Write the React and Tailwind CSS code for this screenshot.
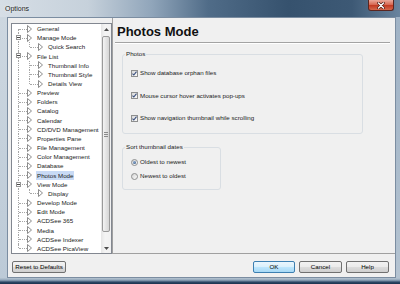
import React from "react";

const tree = [
  { label: "General", level: 0 },
  { label: "Manage Mode", level: 0, open: true },
  { label: "Quick Search", level: 1, last: true },
  { label: "File List", level: 0, open: true },
  { label: "Thumbnail Info", level: 1 },
  { label: "Thumbnail Style", level: 1 },
  { label: "Details View", level: 1, last: true },
  { label: "Preview", level: 0 },
  { label: "Folders", level: 0 },
  { label: "Catalog", level: 0 },
  { label: "Calendar", level: 0 },
  { label: "CD/DVD Management", level: 0 },
  { label: "Properties Pane", level: 0 },
  { label: "File Management", level: 0 },
  { label: "Color Management", level: 0 },
  { label: "Database", level: 0 },
  { label: "Photos Mode", level: 0, selected: true },
  { label: "View Mode", level: 0, open: true },
  { label: "Display", level: 1, last: true },
  { label: "Develop Mode", level: 0 },
  { label: "Edit Mode", level: 0 },
  { label: "ACDSee 365", level: 0 },
  { label: "Media", level: 0 },
  { label: "ACDSee Indexer", level: 0 },
  { label: "ACDSee PicaView", level: 0 },
];

function Arrow() {
  return (
    <svg width="5" height="8" viewBox="0 0 5 8" className="shrink-0">
      <path d="M0.5 0.5 L4.5 4 L0.5 7.5 Z" fill="#fff" stroke="#808080" strokeWidth="0.9" strokeLinejoin="round" />
    </svg>
  );
}

function TreeRow({ item, first, lastRow }) {
  const child = item.level === 1;
  // vertical root line
  let rootLine = "inset-y-0";
  if (first) rootLine = "top-1/2 bottom-0";
  if (lastRow) rootLine = "top-0 h-1/2";

  return (
    <div className="flex h-[9.17px] items-center">
      <div className={child ? "relative h-full w-[26px] shrink-0" : "relative h-full w-[15px] shrink-0"}>
        <span className={`absolute left-[6px] border-l border-dotted border-[#a6a6a6] ${rootLine}`} />
        {!child && <span className="absolute left-[7px] top-1/2 w-[8px] border-t border-dotted border-[#a6a6a6]" />}
        {child && (
          <>
            <span className={`absolute left-[17px] border-l border-dotted border-[#a6a6a6] ${item.last ? "top-0 h-1/2" : "inset-y-0"}`} />
            <span className="absolute left-[18px] top-1/2 w-[8px] border-t border-dotted border-[#a6a6a6]" />
          </>
        )}
        {item.open && (
          <span className="absolute left-[4px] top-[2px] flex h-[5px] w-[5px] items-center justify-center border border-[#969696] bg-white">
            <span className="h-px w-[3px] bg-[#4a4a4a]" />
          </span>
        )}
      </div>
      <Arrow />
      <span
        className={
          item.selected
            ? "ml-[4px] whitespace-nowrap bg-[#c8daf5] px-[1px] leading-[9px]"
            : "ml-[5px] whitespace-nowrap leading-[9px]"
        }
      >
        {item.label}
      </span>
    </div>
  );
}

function Scrollbar() {
  return (
    <div className="flex w-[10px] shrink-0 flex-col bg-[linear-gradient(to_right,#e6e6e6,#f4f4f4_40%,#f1f1f1)]">
      <div className="flex h-[11px] items-center justify-center">
        <svg width="5" height="3" viewBox="0 0 5 3">
          <path d="M0 3 L2.5 0 L5 3 Z" fill="#4d4d4d" />
        </svg>
      </div>
      <div className="mx-auto mt-[1px] flex h-[196px] w-[8px] items-center justify-center rounded-[2px] border border-[#9a9a9a] bg-[linear-gradient(to_right,#f4f4f4,#e4e4e4_50%,#d6d6d6)]">
        <div className="flex flex-col gap-[1px]">
          <span className="h-px w-[4px] bg-[#8a8a8a]" />
          <span className="h-px w-[4px] bg-[#8a8a8a]" />
          <span className="h-px w-[4px] bg-[#8a8a8a]" />
        </div>
      </div>
      <div className="flex-1" />
      <div className="flex h-[10px] items-center justify-center">
        <svg width="5" height="3" viewBox="0 0 5 3">
          <path d="M0 0 L2.5 3 L5 0 Z" fill="#4d4d4d" />
        </svg>
      </div>
    </div>
  );
}

function Check({ label }) {
  return (
    <div className="flex h-[9px] items-center">
      <span className="flex h-[7px] w-[7px] shrink-0 items-center justify-center border border-[#8e8f8f] bg-[linear-gradient(135deg,#d9d9d9,#fafafa)]">
        <svg width="5" height="5" viewBox="0 0 5 5">
          <path d="M0.5 2.6 L1.8 4 L4.5 0.6" fill="none" stroke="#364c7c" strokeWidth="1.1" />
        </svg>
      </span>
      <span className="ml-[2px] whitespace-nowrap">{label}</span>
    </div>
  );
}

function Radio({ label, checked }) {
  return (
    <div className="flex h-[9px] items-center">
      <span className="flex h-[7px] w-[7px] shrink-0 items-center justify-center rounded-full border border-[#8e8f8f] bg-[linear-gradient(135deg,#d4d4d4,#fbfbfb)]">
        {checked && <span className="h-[3px] w-[3px] rounded-full bg-[radial-gradient(circle_at_35%_35%,#8fb0d8,#2d4d78)]" />}
      </span>
      <span className="ml-[2px] whitespace-nowrap">{label}</span>
    </div>
  );
}

function Btn({ children, ok, className }) {
  return (
    <button
      className={`${className} flex h-[12px] items-center justify-center rounded-[2px] border leading-[8px] text-black ${
        ok
          ? "border-[#3c7fb1] bg-[linear-gradient(to_bottom,#eaf6fd,#d9f0fc_50%,#bee6fd_50%,#a7d9f5)]"
          : "border-[#707070] bg-[linear-gradient(to_bottom,#f2f2f2,#ebebeb_50%,#dddddd_50%,#cfcfcf)]"
      }`}
    >
      {children}
    </button>
  );
}

export default function App() {
  return (
    <div className="flex h-[284px] w-[400px] flex-col overflow-hidden bg-[#b9c7d4] font-['Liberation_Sans',Arial,sans-serif] text-[6.2px] text-[#222]">
      {/* glass title bar */}
      <div className="flex h-[17px] shrink-0 items-start justify-between bg-[linear-gradient(to_right,#d6dee6_0%,#c6d1db_22%,#90a5ba_38%,#506c88_52%,#36526e_72%,#3d5975_88%,#6a849e_100%)]">
        <span className="ml-[5px] mt-[5px] text-[7px] leading-[8px] text-[#1b1b1b] [text-shadow:0_0_3px_#fff]">Options</span>
        <div className="mr-[6px] flex h-[11px] w-[26px] items-center justify-center rounded-b-[3px] border border-t-0 border-[#5b2620] bg-[linear-gradient(to_bottom,#eaa99b,#d86a55_45%,#c23b24_55%,#d4684c)]">
          <svg width="8" height="7" viewBox="0 0 8 7">
            <path d="M1.5 1 L6.5 6 M6.5 1 L1.5 6" stroke="#4a1d18" strokeWidth="2.6" strokeLinecap="round" />
            <path d="M1.5 1 L6.5 6 M6.5 1 L1.5 6" stroke="#fff" strokeWidth="1.4" strokeLinecap="round" />
          </svg>
        </div>
      </div>

      <div className="flex h-[261px] shrink-0">
        <div className="w-[7px] bg-[linear-gradient(to_bottom,#cdd7e0,#bccad7)]" />
        <div className="flex h-[261px] w-[389px] flex-col border border-[#7b8da1] bg-[#f0f0f0]">
          <div className="flex h-[236px]">
            {/* category tree */}
            <div className="ml-[3px] mt-[5px] flex h-[231px] w-[101px] border border-[#828790] bg-white">
              <div className="flex-1 overflow-hidden">
                {tree.map((item, i) => (
                  <TreeRow key={item.label} item={item} first={i === 0} lastRow={i === tree.length - 1} />
                ))}
              </div>
              <Scrollbar />
            </div>

            {/* settings page */}
            <div className="flex-1 border-b border-l border-[#a0a0a0]">
              <div className="pl-[4px] pt-[6px] text-[13px] font-bold leading-[15px] text-[#111]">Photos Mode</div>
              <div className="ml-[2px] mr-[5px] mt-[3px] border-b border-t border-b-white border-t-[#a3a3a3]" />

              <fieldset className="ml-[9px] mt-[6px] w-[241px] rounded-[3px] border border-[#d9dee3] pb-[10px] pt-[10.5px]">
                <legend className="ml-[2px] px-[1px] leading-[8px]">Photos</legend>
                <div className="ml-[8px] flex flex-col gap-[13.5px]">
                  <Check label="Show database orphan files" />
                  <Check label="Mouse cursor hover activates pop-ups" />
                  <Check label="Show navigation thumbnail while scrolling" />
                </div>
              </fieldset>

              <fieldset className="ml-[9px] mt-[9.5px] w-[99px] rounded-[3px] border border-[#d9dee3] pb-[8px] pt-[6.5px]">
                <legend className="ml-[2px] px-[1px] leading-[8px]">Sort thumbnail dates</legend>
                <div className="ml-[8px] flex flex-col gap-[5px]">
                  <Radio label="Oldest to newest" checked />
                  <Radio label="Newest to oldest" />
                </div>
              </fieldset>
            </div>
          </div>

          <div className="mt-[7px] flex h-[12px]">
            <Btn className="ml-[4px] w-[54px]">Reset to Defaults</Btn>
            <Btn ok className="ml-auto w-[42px]">OK</Btn>
            <Btn className="ml-[4px] w-[43px]">Cancel</Btn>
            <Btn className="ml-[4px] mr-[6px] w-[43px]">Help</Btn>
          </div>
        </div>
        <div className="w-[4px] bg-[linear-gradient(to_bottom,#9fb2c5,#b4c3d1)]" />
      </div>

      <div className="h-[6px] shrink-0 bg-[linear-gradient(to_bottom,#b8c6d3,#91a5b9_35%,#2b4664_70%,#1b324c)]" />
    </div>
  );
}
